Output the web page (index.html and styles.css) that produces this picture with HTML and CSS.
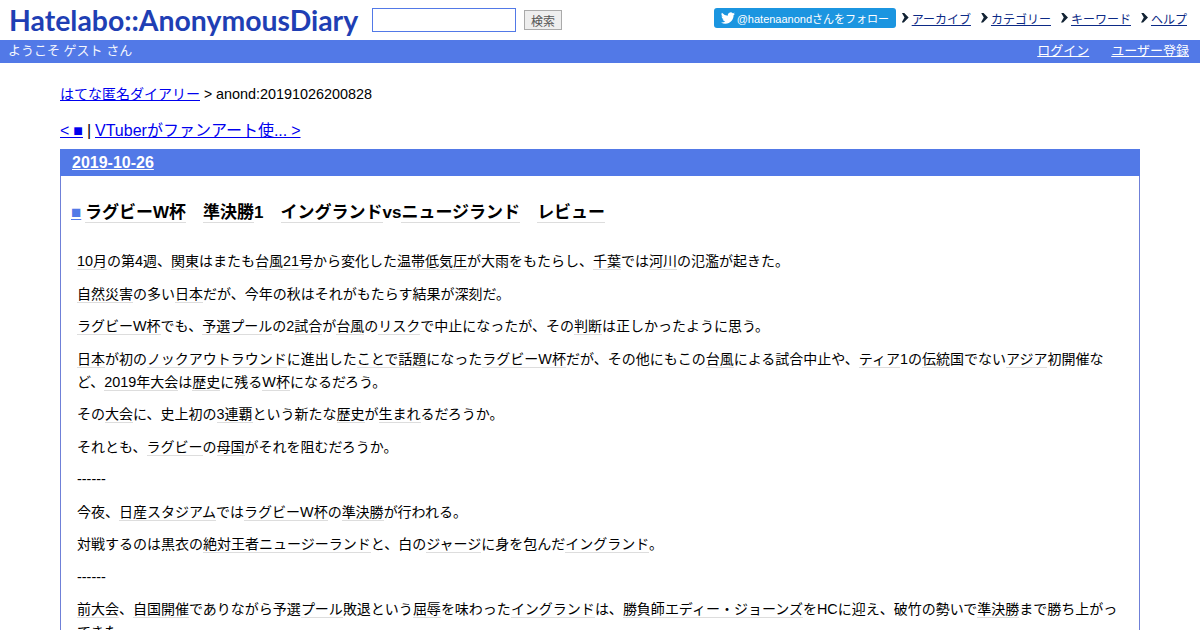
FILE: index.html
```html
<!DOCTYPE html>
<html lang="ja">
<head>
<meta charset="utf-8">
<title>anond:20191026200828</title>
<link rel="stylesheet" href="styles.css">
</head>
<body>
<header class="top">
  <div class="top-left">
    <a class="logo" href="#">Hatelabo::AnonymousDiary</a>
    <form class="search">
      <input class="search-input" type="text">
      <button class="search-btn" type="button">検索</button>
    </form>
  </div>
  <nav class="top-right">
    <a class="follow" href="#">
      <svg class="bird" viewBox="0 0 24 24" width="14" height="14"><path fill="#fff" d="M23.95 4.57a10 10 0 0 1-2.82.77 4.96 4.96 0 0 0 2.16-2.72 9.9 9.9 0 0 1-3.12 1.19 4.92 4.92 0 0 0-8.38 4.48A13.98 13.98 0 0 1 1.64 3.16a4.92 4.92 0 0 0 1.52 6.57 4.9 4.9 0 0 1-2.23-.61v.06a4.92 4.92 0 0 0 3.95 4.83 4.96 4.96 0 0 1-2.21.08 4.93 4.93 0 0 0 4.6 3.42A9.87 9.87 0 0 1 0 19.54a13.94 13.94 0 0 0 7.55 2.21c9.05 0 14-7.5 14-13.98 0-.21 0-.42-.02-.63a9.94 9.94 0 0 0 2.46-2.55z"/></svg>
      <span>@hatenaanondさんをフォロー</span>
    </a>
    <a class="menu" href="#">アーカイブ</a>
    <a class="menu" href="#">カテゴリー</a>
    <a class="menu" href="#">キーワード</a>
    <a class="menu" href="#">ヘルプ</a>
  </nav>
</header>
<div class="bar">
  <span>ようこそ ゲスト さん</span>
  <div class="bar-links"><a href="#">ログイン</a><a href="#">ユーザー登録</a></div>
</div>
<main class="main">
  <p class="crumb"><a href="#">はてな匿名ダイアリー</a> &gt; <span class="en">anond:20191026200828</span></p>
  <p class="pager"><a href="#">&lt; ■</a> | <a href="#">VTuberがファンアート使... &gt;</a></p>
  <section class="day">
    <h2 class="date"><a href="#">2019-10-26</a></h2>
    <div class="body">
      <h3 class="title"><a class="mark" href="#">■</a> <a class="k" href="#">ラグビーW杯</a>　<a class="k" href="#">準決勝</a>1　<a class="k" href="#">イングランド</a>vs<a class="k" href="#">ニュージランド</a>　<a class="k" href="#">レビュー</a></h3>
      <p><a class="k" href="#"><span class="en">10</span>月</a>の第<span class="en">4</span>週、<a class="k" href="#">関東</a>はまたも<a class="k" href="#">台風<span class="en">21</span>号</a>から変化した<a class="k" href="#">温帯低気圧</a>が大雨をもたらし、<a class="k" href="#">千葉</a>では<a class="k" href="#">河川</a>の氾濫が起きた。</p>
      <p><a class="k" href="#">自然災害</a>の多い<a class="k" href="#">日本</a>だが、今年の秋はそれがもたらす結果が深刻だ。</p>
      <p><a class="k" href="#">ラグビー<span class="en">W</span>杯</a>でも、<a class="k" href="#">予選</a><a class="k" href="#">プール</a>の<span class="en">2</span><a class="k" href="#">試合</a>が<a class="k" href="#">台風</a>の<a class="k" href="#">リスク</a>で中止になったが、その<a class="k" href="#">判断</a>は正しかったように思う。</p>
      <p><a class="k" href="#">日本</a>が初の<a class="k" href="#">ノックアウトラウンド</a>に進出した<a class="k" href="#">ことで</a><a class="k" href="#">話題</a>になった<a class="k" href="#">ラグビー<span class="en">W</span>杯</a>だが、その他にもこの<a class="k" href="#">台風</a>による試合中止や、<a class="k" href="#">ティア</a><span class="en">1</span>の<a class="k" href="#">伝統</a>国でない<a class="k" href="#">アジア</a>初開催など、<a class="k" href="#"><span class="en">2019</span>年</a><a class="k" href="#">大会</a>は<a class="k" href="#">歴史</a>に残る<a class="k" href="#"><span class="en">W</span>杯</a>になるだろう。</p>
      <p>その<a class="k" href="#">大会</a>に、史上初の<a class="k" href="#"><span class="en">3</span>連覇</a>という新たな<a class="k" href="#">歴史</a>が<a class="k" href="#">生まれ</a>るだろうか。</p>
      <p>それとも、<a class="k" href="#">ラグビー</a>の<a class="k" href="#">母国</a>がそれを阻むだろうか。</p>
      <p><span class="en">------</span></p>
      <p>今夜、<a class="k" href="#">日産スタジアム</a>では<a class="k" href="#">ラグビー<span class="en">W</span>杯</a>の<a class="k" href="#">準決勝</a>が行われる。</p>
      <p>対戦するのは黒衣の<a class="k" href="#">絶対王者</a><a class="k" href="#">ニュージーランド</a>と、白の<a class="k" href="#">ジャージ</a>に身を包んだ<a class="k" href="#">イングランド</a>。</p>
      <p><span class="en">------</span></p>
      <p><a class="k" href="#">前大会</a>、<a class="k" href="#">自国開催</a>でありながら予選<a class="k" href="#">プール</a>敗退という<a class="k" href="#">屈辱</a>を味わった<a class="k" href="#">イングランド</a>は、<a class="k" href="#">勝負師</a><a class="k" href="#">エディー・ジョーンズ</a>を<span class="en">HC</span>に迎え、破竹の勢いで<a class="k" href="#">準決勝</a>まで勝ち上がってきた。</p>
    </div>
  </section>
</main>
</body>
</html>
```
FILE: styles.css
```css
html, body { margin: 0; padding: 0; }
body {
  background: #fff;
  color: #000;
  font-family: "Liberation Sans", "Noto Sans CJK JP", sans-serif;
  font-size: 14px;
}
.en { font-size: 14.4px; }
.top {
  height: 40px;
  display: flex;
  justify-content: space-between;
  align-items: flex-start;
  box-sizing: border-box;
}
.top-left { display: flex; align-items: center; height: 40px; padding-left: 9px; }
.logo {
  font-family: "Lato", "Liberation Sans", sans-serif;
  font-weight: 700;
  font-size: 28.4px;
  line-height: 40px;
  color: #1f3fb4;
  text-decoration: none;
  width: 363px;
  white-space: nowrap;
}
.search { display: flex; align-items: center; gap: 8px; margin: 0; }
.search-input {
  width: 144px;
  height: 24px;
  box-sizing: border-box;
  border: 1px solid #5279e7;
  padding: 0 3px;
  background: #fff;
}
.search-btn {
  width: 38px;
  height: 20px;
  box-sizing: border-box;
  border: 1px solid #aaa;
  background: #eee;
  color: #555;
  font: 12px "Liberation Sans", "Noto Sans CJK JP", sans-serif;
  padding: 0;
}
.top-right { display: flex; align-items: center; height: 20px; margin-top: 8px; padding-right: 13px; }
.follow {
  display: flex;
  align-items: center;
  gap: 2px;
  height: 20px;
  width: 182px;
  box-sizing: border-box;
  padding-left: 7px;
  background: #1b95e0;
  border-radius: 3px;
  color: #fff;
  font-size: 11px;
  text-decoration: none;
  white-space: nowrap;
}
.bird { flex: none; }
.menu {
  position: relative;
  margin-left: 20px;
  font-size: 12px;
  color: #0c2a86;
}
.menu::before {
  content: "";
  position: absolute;
  left: -10px;
  top: 3px;
  width: 7px;
  height: 10px;
  background: #123;
  clip-path: polygon(0 0, 30% 0, 100% 50%, 30% 100%, 0 100%, 40% 50%);
}
.follow + .menu { margin-left: 16px; }
.bar {
  height: 23px;
  background: #5279e7;
  color: #f4f6fd;
  display: flex;
  justify-content: space-between;
  align-items: center;
  padding: 0 11px 4px 8px;
  box-sizing: border-box;
  font-size: 13px;
}
.bar-links { display: flex; gap: 22px; }
.bar-links a { color: #fff; }
.main { padding: 0 60px; }
.crumb { margin: 0; padding-top: 20px; line-height: 22px; }
.pager { margin: 15px 0 0; font-size: 16px; word-spacing: -0.5px; line-height: 22px; }
.day { margin-top: 7px; border: 1px solid #6f80d8; border-top: 0; }
.date {
  margin: 0 -1px;
  height: 27px;
  line-height: 27px;
  background: #5279e7;
  padding-left: 12px;
  font-size: 16px;
}
.date a { color: #fff; }
.body { padding: 0 16px; }
.title { margin: 24px 0 25px -6px; font-size: 17px; word-spacing: -1px; line-height: 25px; }
.mark { color: #5279e7; }
.k { color: #000; text-decoration: none; border-bottom: 1px solid #ddd; }
.body p { margin: 9.5px 0; line-height: 23px; }
```
